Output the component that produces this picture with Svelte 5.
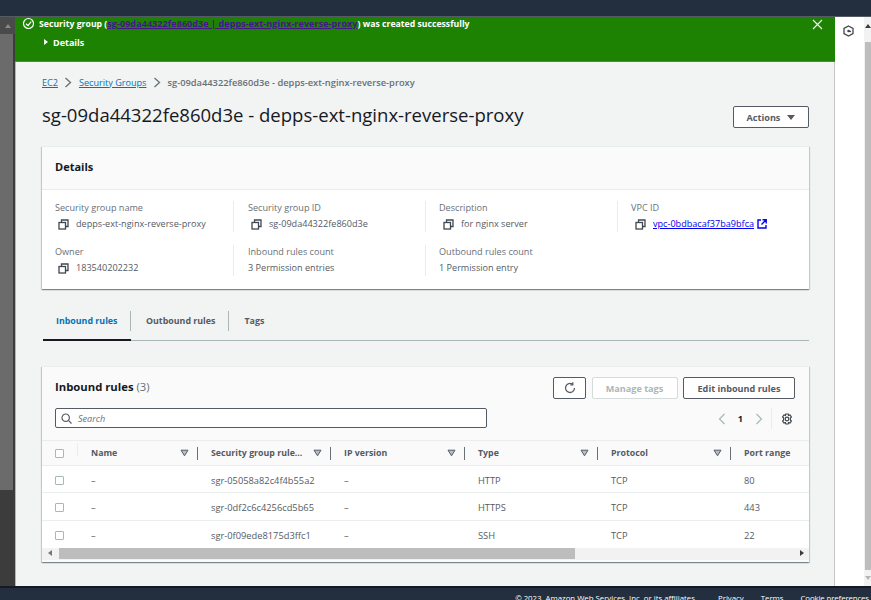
<script>
  const details = [
    [
      { label: 'Security group name', value: 'depps-ext-nginx-reverse-proxy', copy: true },
      { label: 'Security group ID', value: 'sg-09da44322fe860d3e', copy: true },
      { label: 'Description', value: 'for nginx server', copy: true },
      { label: 'VPC ID', value: 'vpc-0bdbacaf37ba9bfca', copy: true, link: true }
    ],
    [
      { label: 'Owner', value: '183540202232', copy: true },
      { label: 'Inbound rules count', value: '3 Permission entries' },
      { label: 'Outbound rules count', value: '1 Permission entry' }
    ]
  ];

  const columns = [
    { name: 'Name', filter: true },
    { name: 'Security group rule...', filter: true },
    { name: 'IP version', filter: true },
    { name: 'Type', filter: true },
    { name: 'Protocol', filter: true },
    { name: 'Port range' }
  ];

  const rows = [
    ['–', 'sgr-05058a82c4f4b55a2', '–', 'HTTP', 'TCP', '80'],
    ['–', 'sgr-0df2c6c4256cd5b65', '–', 'HTTPS', 'TCP', '443'],
    ['–', 'sgr-0f09ede8175d3ffc1', '–', 'SSH', 'TCP', '22']
  ];
</script>

{#snippet copyIcon()}
  <svg class="copy" width="11" height="11" viewBox="0 0 11 11" fill="none" stroke="#414750" stroke-width="1.3">
    <rect x="1" y="3.5" width="6.5" height="6.5" />
    <path d="M3.5 3.5V1H10V7.5H7.5" />
  </svg>
{/snippet}

{#snippet filterIcon()}
  <svg class="filter" width="9" height="8" viewBox="0 0 9 8">
    <path d="M1 1.2H8L4.5 6.8Z" fill="#b8bfc4" stroke="#545b64" stroke-width="1" />
  </svg>
{/snippet}

<div class="page">
  <div class="top"></div>
  <div class="middle">
    <div class="leftbar">
      <div class="arrow-box"><span class="up"></span></div>
      <div class="left-thumb"></div>
    </div>

    <div class="main">
      <div class="flash">
        <div class="flash-line">
          <svg width="13" height="13" viewBox="0 0 13 13" fill="none" stroke="#fff" stroke-width="1.2">
            <circle cx="6.5" cy="6.5" r="5" />
            <path d="M4 6.7 6 8.6 9.2 4.6" />
          </svg>
          <span>Security group (<span class="flash-link">sg-09da44322fe860d3e | depps-ext-nginx-reverse-proxy</span>) was created successfully</span>
          <svg class="close" width="11" height="11" viewBox="0 0 11 11" stroke="#f2f3f3" stroke-width="1.2">
            <path d="M1 1 10 10M10 1 1 10" />
          </svg>
        </div>
        <div class="flash-details"><span class="tri"></span>Details</div>
      </div>

      <div class="content">
        <nav class="crumbs">
          <span class="crumb">EC2</span>
          <svg width="8" height="11" viewBox="0 0 8 11" fill="none" stroke="#687078" stroke-width="1.3"><path d="M1.5 1 6.5 5.5 1.5 10" /></svg>
          <span class="crumb">Security Groups</span>
          <svg width="8" height="11" viewBox="0 0 8 11" fill="none" stroke="#687078" stroke-width="1.3"><path d="M1.5 1 6.5 5.5 1.5 10" /></svg>
          <span class="crumb-now">sg-09da44322fe860d3e - depps-ext-nginx-reverse-proxy</span>
        </nav>

        <header class="title-row">
          <h1>sg-09da44322fe860d3e - depps-ext-nginx-reverse-proxy</h1>
          <button class="btn actions">Actions <span class="down"></span></button>
        </header>

        <section class="card details">
          <h2>Details</h2>
          <div class="detail-body">
            {#each details as row}
              <div class="detail-row">
                {#each row as item}
                  <div class="detail-cell">
                    <div class="label">{item.label}</div>
                    <div class="value" class:has-copy={item.copy}>
                      {#if item.copy}{@render copyIcon()}{/if}
                      {#if item.link}
                        <span class="vpc">{item.value}</span>
                        <svg width="10" height="10" viewBox="0 0 10 10" fill="none" stroke="#0000ee" stroke-width="1.4">
                          <path d="M4 1H1V9H9V6M5.5 .8H9.2V4.5M9 1 4.5 5.5" />
                        </svg>
                      {:else}
                        <span>{item.value}</span>
                      {/if}
                    </div>
                  </div>
                {/each}
              </div>
            {/each}
          </div>
        </section>

        <div class="tabs">
          <div class="tab active">Inbound rules</div>
          <div class="tab">Outbound rules</div>
          <div class="tab">Tags</div>
        </div>

        <section class="card rules">
          <div class="rules-head">
            <h2>Inbound rules <span class="count">(3)</span></h2>
            <div class="rules-btns">
              <button class="btn refresh" aria-label="Refresh">
                <svg width="12" height="12" viewBox="0 0 12 12" fill="none" stroke="#545b64" stroke-width="1.3">
                  <path d="M10.5 6A4.5 4.5 0 1 1 8.6 2.3" />
                  <path d="M8.8 .3V2.8H6.3" />
                </svg>
              </button>
              <button class="btn disabled">Manage tags</button>
              <button class="btn edit">Edit inbound rules</button>
            </div>
          </div>

          <div class="search-row">
            <div class="search">
              <svg width="11" height="11" viewBox="0 0 11 11" fill="none" stroke="#545b64" stroke-width="1.2">
                <circle cx="4.7" cy="4.7" r="3.7" /><path d="M7.4 7.4 10.5 10.5" />
              </svg>
              <span>Search</span>
            </div>
            <div class="pager">
              <svg width="8" height="12" viewBox="0 0 8 12" fill="none" stroke="#aab7b8" stroke-width="1.2"><path d="M6.5 1 1.5 6 6.5 11" /></svg>
              <span class="page-no">1</span>
              <svg width="8" height="12" viewBox="0 0 8 12" fill="none" stroke="#aab7b8" stroke-width="1.2"><path d="M1.5 1 6.5 6 1.5 11" /></svg>
              <span class="pager-rule"></span>
              <svg width="12" height="12" viewBox="0 0 12 12" fill="none" stroke="#414750" stroke-width="1.2">
                <path d="M4.8 1H7.2L7.6 2.4 9 1.9 10.4 3.9 9.4 5 9.4 7 10.4 8.1 9 10.1 7.6 9.6 7.2 11H4.8L4.4 9.6 3 10.1 1.6 8.1 2.6 7 2.6 5 1.6 3.9 3 1.9 4.4 2.4Z" />
                <circle cx="6" cy="6" r="1.8" />
              </svg>
            </div>
          </div>

          <div class="table">
            <div class="tr head">
              <div class="check-cell"><span class="box"></span><span class="check-rule"></span></div>
              {#each columns as col}
                <div class="th">
                  <span class="th-name">{col.name}</span>
                  {#if col.filter}{@render filterIcon()}<span class="th-rule"></span>{/if}
                </div>
              {/each}
            </div>
            {#each rows as row}
              <div class="tr">
                <div class="check-cell"><span class="box"></span></div>
                {#each row as cell}
                  <div class="td">{cell}</div>
                {/each}
              </div>
            {/each}
          </div>

          <div class="hscroll">
            <span class="hs-left"></span>
            <span class="hs-thumb"></span>
            <span class="hs-right"></span>
          </div>
        </section>
      </div>
    </div>

    <aside class="side">
      <svg width="11" height="12" viewBox="0 0 11 12" fill="none" stroke="#414750" stroke-width="1.3">
        <path d="M5.5 1 10 3.4V8.6L5.5 11 1 8.6V3.4Z" />
        <path d="M5.5 6 8 6.7" /><circle cx="5.5" cy="6" r=".6" />
      </svg>
    </aside>

    <div class="rightbar">
      <div class="r-arrow"><span class="up dark"></span></div>
      <div class="r-thumb"></div>
      <div class="r-arrow bottom"><span class="r-down"></span></div>
    </div>
  </div>

  <footer class="footer">
    <span class="copyright">© 2023, Amazon Web Services, Inc. or its affiliates.</span>
    <span class="foot-link">Privacy</span>
    <span class="foot-link">Terms</span>
    <span class="foot-link cookie">Cookie preferences</span>
  </footer>
</div>

<style>
  :global(body) {
    margin: 0;
    font-family: "Open Sans", "Noto Sans", sans-serif;
    background: #232f3e;
  }

  .page {
    width: 871px;
    height: 600px;
    display: flex;
    flex-direction: column;
    overflow: hidden;
    font-size: 9.1px;
    color: #545b64;
  }

  .top {
    height: 16px;
    flex: none;
    background: #232f3e;
    border-bottom: 1px solid #545b64;
  }

  .middle {
    height: 569px;
    flex: none;
    display: flex;
    background: #fff;
  }

  .leftbar {
    width: 15px;
    flex: none;
    background: #3c3c3c;
    box-sizing: border-box;
    display: flex;
    flex-direction: column;
  }

  .arrow-box {
    height: 17px;
    background: #4a4a4a;
    display: flex;
    align-items: center;
    justify-content: center;
  }

  .up {
    width: 0;
    height: 0;
    border-left: 3.5px solid transparent;
    border-right: 3.5px solid transparent;
    border-bottom: 4px solid #8a8a8a;
  }

  .up.dark {
    border-bottom-color: #3c3c3c;
  }

  .left-thumb {
    height: 456px;
    margin-right: 2px;
    background: #6b6b6b;
  }

  .main {
    flex: 1;
    min-width: 0;
    background: #f2f3f3;
    border-left: 1px solid #b5b5b5;
    border-right: 1px solid #c6c6c6;
    display: flex;
    flex-direction: column;
  }

  .flash {
    height: 45px;
    flex: none;
    box-sizing: border-box;
    background: #1d8102;
    border-bottom: 1px solid #687078;
    margin: 0 -1px;
    color: #fff;
    font-weight: 700;
    font-size: 8.7px;
    padding: 0 0 0 7px;
  }

  .flash-line {
    display: flex;
    align-items: center;
    gap: 4px;
    height: 13px;
  }

  .flash-link {
    color: #44168a;
    font-size: 9.15px;
    text-decoration: underline;
  }

  .close {
    margin-left: auto;
    margin-right: 12px;
    margin-top: 1px;
  }

  .flash-details {
    display: flex;
    align-items: center;
    gap: 5px;
    margin: 5px 0 0 22px;
    height: 14px;
    font-size: 9px;
  }

  .tri {
    width: 0;
    height: 0;
    border-top: 3.5px solid transparent;
    border-bottom: 3.5px solid transparent;
    border-left: 4.5px solid #fff;
  }

  .content {
    padding: 0 25px 0 26px;
  }

  .crumbs {
    height: 40px;
    display: flex;
    align-items: center;
    gap: 6.5px;
  }

  .crumb {
    color: #0073bb;
    text-decoration: underline;
  }

  .crumb-now {
    color: #687078;
    font-weight: 600;
    font-size: 9.3px;
  }

  .title-row {
    height: 30px;
    display: flex;
    align-items: center;
    justify-content: space-between;
  }

  h1 {
    margin: 0 0 6px;
    font-size: 18.55px;
    font-weight: 400;
    color: #16191f;
  }

  .btn {
    font: inherit;
    font-weight: 700;
    color: #545b64;
    background: #fff;
    border: 1px solid #545b64;
    border-radius: 2px;
    padding: 0;
    height: 22px;
    box-sizing: border-box;
  }

  .actions {
    width: 76px;
    display: flex;
    align-items: center;
    justify-content: center;
    gap: 7px;
  }

  .down {
    width: 0;
    height: 0;
    border-left: 4px solid transparent;
    border-right: 4px solid transparent;
    border-top: 5px solid #545b64;
  }

  .card {
    background: #fff;
    box-shadow: 0 1px 1px rgba(0, 28, 36, 0.3), 1px 1px 1px rgba(0, 28, 36, 0.15), -1px 1px 1px rgba(0, 28, 36, 0.15);
    border-top: 1px solid #eaeded;
  }

  .details {
    margin-top: 14px;
    height: 142px;
  }

  .details h2 {
    margin: 0;
    height: 42px;
    line-height: 40px;
    padding-left: 13px;
    font-size: 11px;
    font-weight: 700;
    color: #16191f;
    background: #fafafa;
    border-bottom: 1px solid #eaeded;
  }

  .detail-body {
    padding-top: 11px;
  }

  .detail-row {
    display: grid;
    grid-template-columns: 191px 192px 192px 1fr;
    height: 30px;
    margin-bottom: 14px;
  }

  .detail-cell {
    padding-left: 13px;
    box-sizing: border-box;
  }

  .detail-cell:nth-child(2) {
    padding-left: 14px;
  }

  .detail-cell + .detail-cell {
    border-left: 1px solid #eaeded;
  }

  .label {
    color: #687078;
    line-height: 14px;
  }

  .value {
    line-height: 16px;
    margin-top: 1px;
    display: flex;
    align-items: center;
    gap: 7px;
  }

  .value.has-copy {
    padding-left: 3px;
  }

  .detail-cell:nth-child(n + 3) .value.has-copy {
    padding-left: 4px;
  }

  .vpc {
    color: #0000ee;
    text-decoration: underline;
    margin-right: -4px;
  }

  .tabs {
    display: flex;
    margin: 19px 0 0 1px;
    height: 32px;
    border-bottom: 1px solid #aab7b8;
    white-space: nowrap;
    font-size: 8.85px;
  }

  .tab {
    height: 20px;
    margin-top: 3px;
    line-height: 20px;
    padding: 0 13px 0 15px;
    font-weight: 700;
    color: #545b64;
    border-left: 1px solid #aab7b8;
    position: relative;
    box-sizing: border-box;
  }

  .tab:first-child {
    border-left: 0;
    padding: 0 13px;
    width: 87px;
  }

  .tab.active {
    color: #0073bb;
  }

  .tab.active::after {
    content: '';
    position: absolute;
    left: 0;
    right: -1px;
    bottom: -10px;
    height: 2px;
    background: #16191f;
  }

  .rules {
    margin-top: 25px;
    height: 195px;
    background: #fafafa;
    position: relative;
  }

  .rules-head {
    height: 41px;
    display: flex;
    align-items: flex-start;
    justify-content: space-between;
    padding: 10px 14px 0 13px;
    box-sizing: border-box;
  }

  .rules h2 {
    margin: 0;
    font-size: 11.3px;
    line-height: 20px;
    font-weight: 700;
    color: #16191f;
  }

  .count {
    font-weight: 400;
    color: #687078;
  }

  .rules-btns {
    display: flex;
    gap: 5.5px;
  }

  .refresh {
    width: 33px;
    display: flex;
    align-items: center;
    justify-content: center;
  }

  .disabled {
    width: 86px;
    color: #aab7b8;
    border-color: #d5dbdb;
  }

  .edit {
    width: 112px;
  }

  .search-row {
    height: 21px;
    display: flex;
    align-items: flex-start;
    padding: 0 16px 0 13px;
  }

  .search {
    width: 432px;
    height: 20px;
    box-sizing: border-box;
    background: #fff;
    border: 1px solid #545b64;
    border-radius: 2px;
    display: flex;
    align-items: center;
    gap: 6px;
    padding-left: 5px;
    font-style: italic;
    color: #687078;
  }

  .pager {
    margin-left: auto;
    display: flex;
    align-items: center;
    gap: 12px;
  }

  .page-no {
    font-weight: 700;
    color: #16191f;
  }

  .pager-rule {
    width: 1px;
    height: 21px;
    background: #eaeded;
    margin: 0 -3px 0 -4px;
  }

  .table {
    margin-top: 11px;
    overflow: hidden;
  }

  .tr {
    display: grid;
    grid-template-columns: 36px 120px 133px 134px 133px 133px 1fr;
    height: 27px;
    align-items: center;
    background: #fff;
    border-bottom: 1px solid #eaeded;
    box-sizing: border-box;
  }

  .tr:nth-child(3) {
    height: 28px;
  }

  .tr:last-child {
    border-bottom: 0;
  }

  .tr.head {
    height: 26px;
    background: #fafafa;
    border-top: 1px solid #eaeded;
    font-weight: 700;
    font-size: 8.8px;
  }

  .check-cell {
    display: flex;
    align-items: center;
    padding-left: 13px;
    position: relative;
  }

  .tr:not(.head) .check-cell {
    padding-top: 2px;
  }

  .box {
    width: 7px;
    height: 7px;
    background: #fff;
    border: 1px solid #aab7b8;
    border-radius: 1px;
  }

  .check-rule {
    position: absolute;
    right: 0;
    top: -6px;
    width: 1px;
    height: 13px;
    background: #eaeded;
  }

  .th {
    display: flex;
    align-items: center;
    padding-left: 13px;
    box-sizing: border-box;
  }

  .filter {
    margin-left: auto;
    margin-right: 8px;
  }

  .th-rule {
    width: 1px;
    height: 13px;
    background: #687078;
  }

  .td {
    padding: 2px 0 0 13px;
    color: #545b64;
    font-size: 9.3px;
  }

  .hscroll {
    height: 12px;
    display: flex;
    align-items: flex-start;
    background: #f2f2f2;
    position: relative;
  }

  .hs-left {
    width: 0;
    height: 0;
    margin: 2px 0 0 6px;
    border-top: 3.5px solid transparent;
    border-bottom: 3.5px solid transparent;
    border-right: 4px solid #777;
  }

  .hs-thumb {
    width: 516px;
    height: 11px;
    margin-left: 7px;
    background: #bdbdbd;
  }

  .hs-right {
    width: 0;
    height: 0;
    margin: 2px 5px 0 auto;
    border-top: 3.5px solid transparent;
    border-bottom: 3.5px solid transparent;
    border-left: 4px solid #3c3c3c;
  }

  .side {
    width: 29px;
    flex: none;
    background: #fff;
    display: flex;
    justify-content: center;
    align-items: flex-start;
    padding-top: 8px;
    padding-right: 3px;
    box-sizing: border-box;
  }

  .rightbar {
    width: 7px;
    flex: none;
    background: #f2f2f2;
    display: flex;
    flex-direction: column;
  }

  .r-arrow {
    height: 25px;
    display: flex;
    justify-content: center;
    padding-top: 7px;
    box-sizing: border-box;
  }

  .r-arrow.bottom {
    height: 16px;
    padding-top: 6px;
  }

  .r-down {
    width: 0;
    height: 0;
    border-left: 3.5px solid transparent;
    border-right: 3.5px solid transparent;
    border-top: 4px solid #b5b5b5;
  }

  .r-thumb {
    flex: 1;
    background: #bdbdbd;
    margin-left: 1px;
  }

  .footer {
    height: 15px;
    flex: none;
    box-sizing: border-box;
    background: #232f3e;
    border-top: 2px solid #16191f;
    color: #fff;
    display: flex;
    align-items: flex-start;
    justify-content: flex-end;
    gap: 17px;
    padding: 5px 2px 0 0;
    font-size: 7.8px;
    line-height: 11px;
    white-space: nowrap;
  }

  .cookie {
    letter-spacing: -0.1px;
  }

  .copyright {
    margin-right: 4px;
  }
</style>
